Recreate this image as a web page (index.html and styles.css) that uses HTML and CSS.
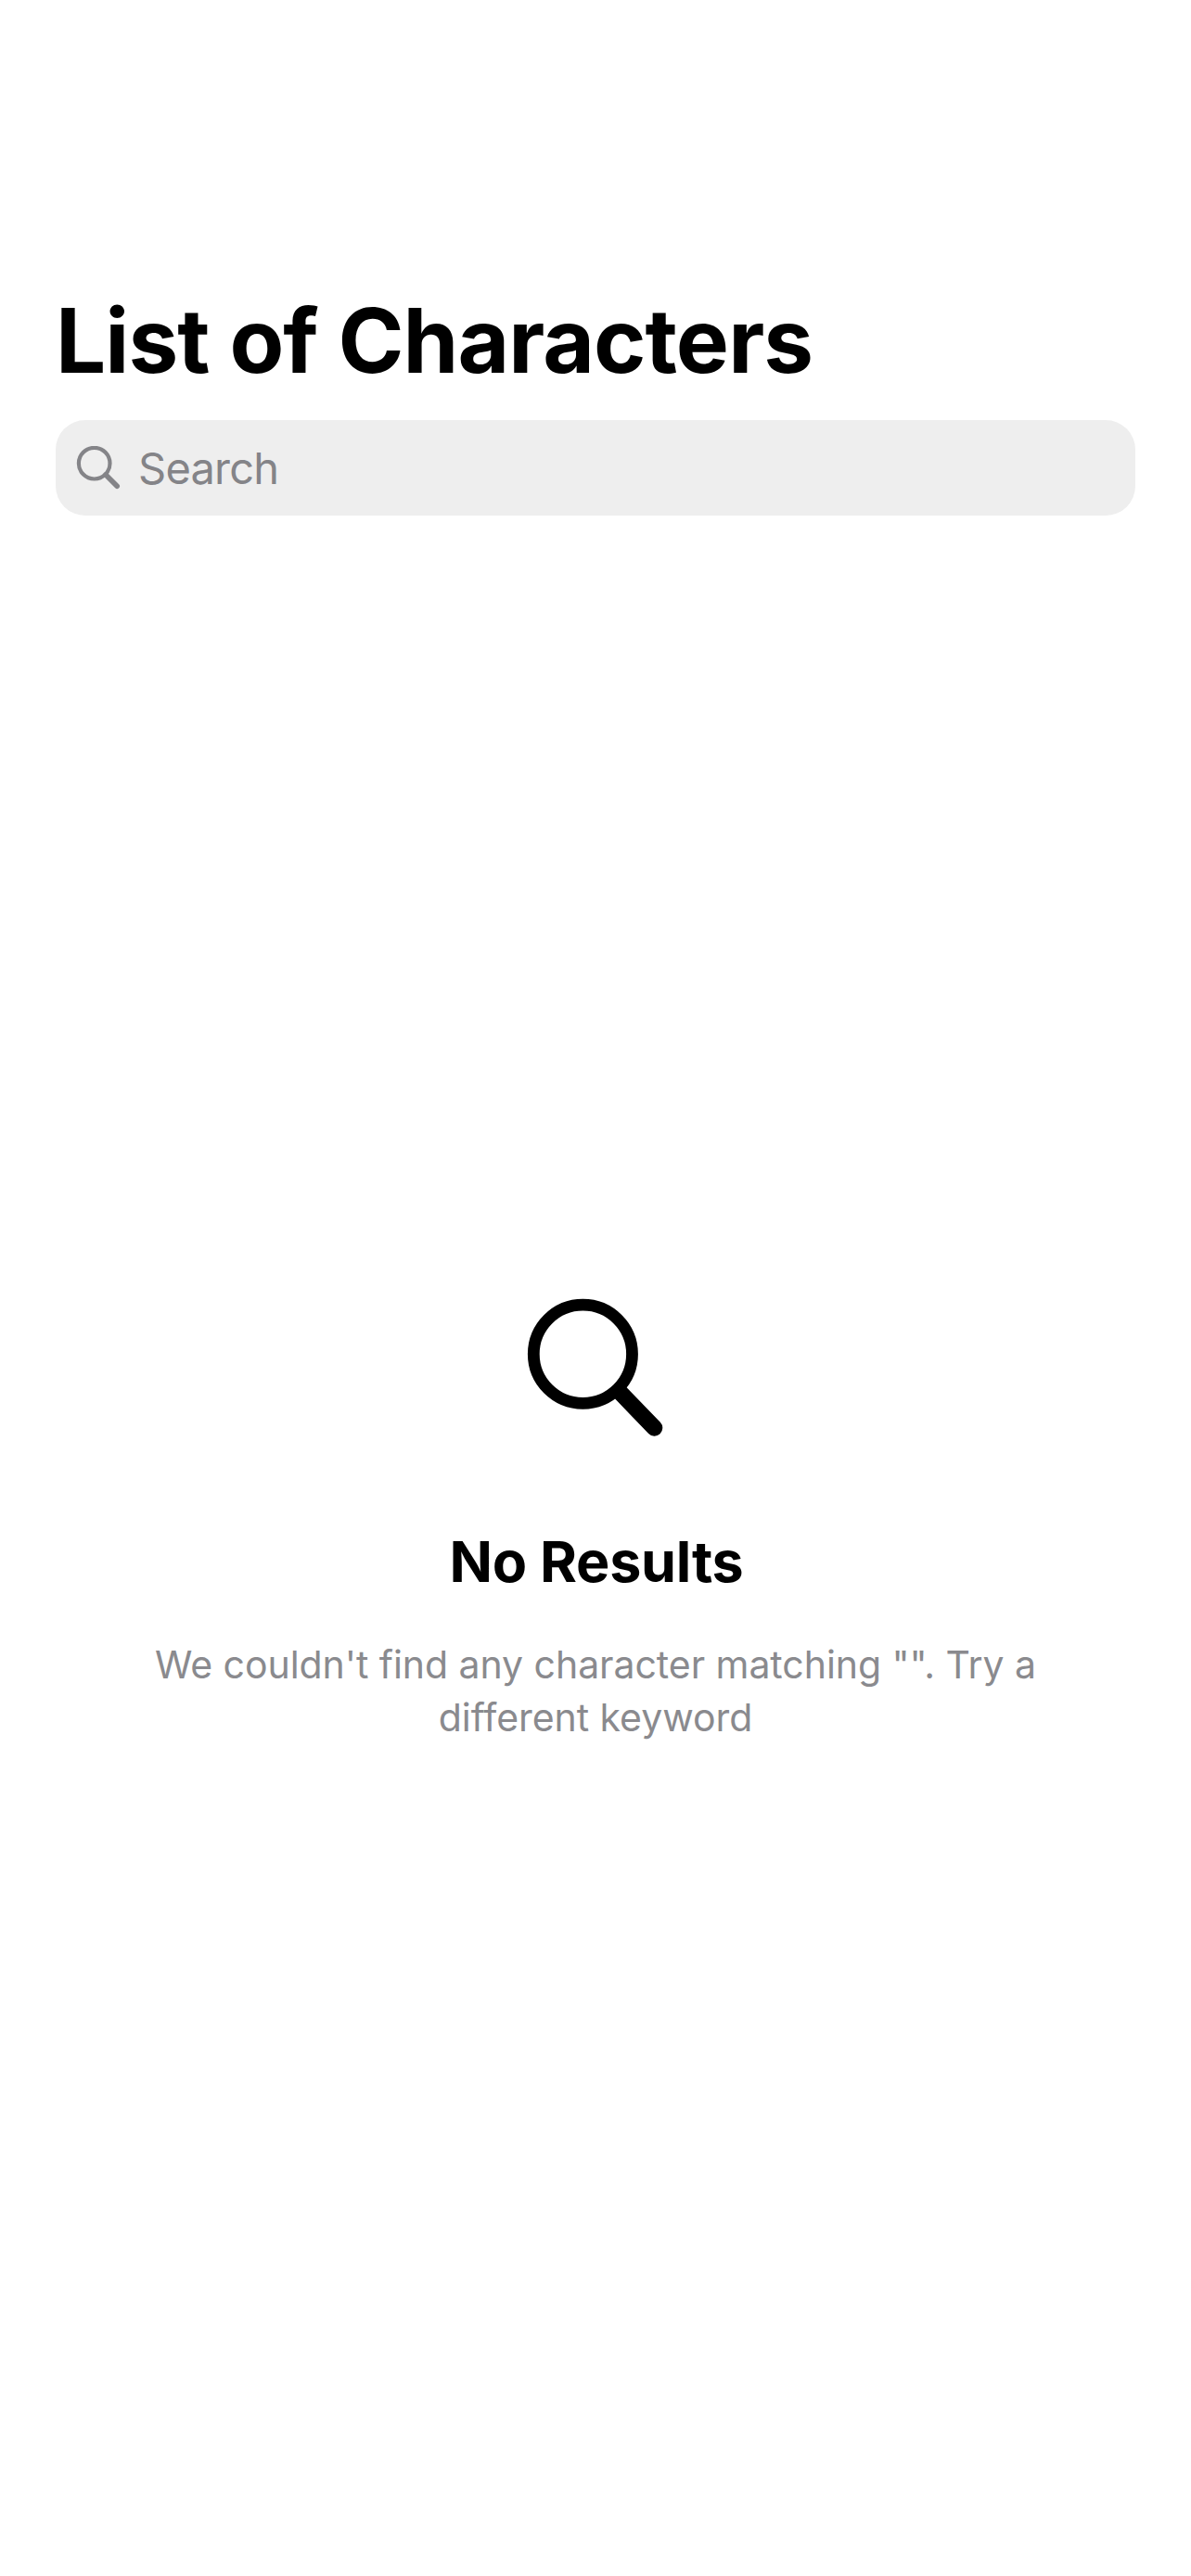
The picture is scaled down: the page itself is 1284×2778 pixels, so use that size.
FILE: index.html
```html
<!DOCTYPE html>
<html lang="en">
<head>
  <meta charset="utf-8">
  <title>List of Characters</title>
  <link rel="stylesheet" href="styles.css">
</head>
<body>
  <main class="screen">
    <h1 class="title">List of Characters</h1>
    <div class="search" role="search">
      <svg class="search-icon" viewBox="0 0 48 47" fill="none" stroke="currentColor" aria-hidden="true">
        <circle cx="19.7" cy="18.7" r="16.8" stroke-width="4.2"/>
        <path d="M32 31L44.2 43.3" stroke-width="5.6" stroke-linecap="round"/>
      </svg>
      <span class="search-label">Search</span>
    </div>
    <section class="empty">
      <svg class="empty-icon" viewBox="0 0 148 150" fill="none" stroke="currentColor" aria-hidden="true">
        <circle cx="60.4" cy="60.3" r="53.1" stroke-width="12.8"/>
        <path d="M100.5 101.5L137.5 139.9" stroke-width="17.6" stroke-linecap="round"/>
      </svg>
      <h2 class="empty-title">No Results</h2>
      <p class="empty-text">We couldn't find any character matching "". Try a different keyword</p>
    </section>
  </main>
</body>
</html>
```
FILE: styles.css
```css
* {
  box-sizing: border-box;
  margin: 0;
  padding: 0;
}

body {
  background: #fff;
  color: #000;
  font-family: Inter, "Liberation Sans", sans-serif;
}

.screen {
  display: flex;
  flex-direction: column;
  min-height: 2778px;
  padding: 309px 60px 0;
}

.title {
  font-size: 96px;
  font-weight: 700;
  line-height: 116px;
  letter-spacing: -0.91px;
}

.search {
  display: flex;
  align-items: center;
  gap: 19px;
  height: 103px;
  margin-top: 28px;
  padding-left: 22px;
  border-radius: 32px;
  background: #eee;
  color: #848488;
}

.search-icon {
  width: 48px;
  height: 47px;
}

.search-label {
  font-size: 47px;
  line-height: 57px;
  letter-spacing: -0.78px;
}

.empty {
  display: flex;
  flex-direction: column;
  align-items: center;
  margin-top: 844px;
  text-align: center;
}

.empty-icon {
  width: 148px;
  height: 150px;
}

.empty-title {
  margin-top: 97px;
  padding-left: 2px;
  font-size: 61px;
  font-weight: 700;
  line-height: 74px;
  letter-spacing: -0.27px;
}

.empty-text {
  width: 1000px;
  margin-top: 46px;
  color: #8a8a8e;
  font-size: 41px;
  line-height: 57px;
  letter-spacing: -0.05px;
}
```
